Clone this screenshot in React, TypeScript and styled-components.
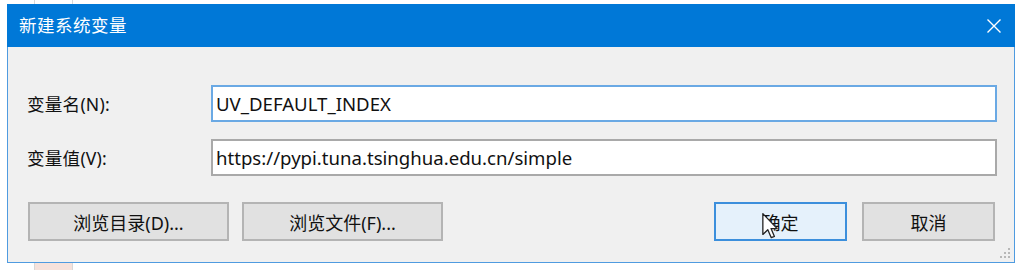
import * as React from "react";
import styled, { createGlobalStyle } from "styled-components";

const GlobalStyle = createGlobalStyle`
  html, body {
    margin: 0;
    padding: 0;
    background: #ffffff;
    width: 1024px;
    height: 270px;
    overflow: hidden;
  }
  body {
    font-family: "Noto Sans", "Noto Sans CJK SC", sans-serif;
  }
`;

// Page behind the dialog
const Desk = styled.div`
  position: relative;
  width: 1024px;
  height: 270px;
  padding: 4px 0 0 7px;
  box-sizing: border-box;
  background-color: #ffffff;
  background-image: linear-gradient(#d8d8d8, #d8d8d8),
    linear-gradient(#d8d8d8, #d8d8d8), linear-gradient(#f6e2dc, #f6e2dc);
  background-size: 1px 270px, 1px 270px, 37px 8px;
  background-position: 34px 0, 72px 0, 35px 262px;
  background-repeat: no-repeat;
`;

const Dialog = styled.div`
  width: 1008px;
  height: 259px;
  display: flex;
  flex-direction: column;
  box-sizing: border-box;
  border: 1px solid #4f9be0;
  border-top: none;
  background: #f0f0f0;
  position: relative;
`;

const TitleBar = styled.div`
  height: 43px;
  flex-shrink: 0;
  display: flex;
  align-items: center;
  justify-content: space-between;
  background: #0078d7;
  margin: 0 -1px;
  padding: 0 13px 0 12px;
  color: #ffffff;
`;

const Title = styled.span`
  font-family: "Noto Sans CJK SC", sans-serif;
  font-size: 17.5px;
  letter-spacing: 0.5px;
  line-height: 1;
  padding-bottom: 2px;
`;

const CloseIcon = styled.svg`
  width: 16px;
  height: 16px;
  margin-top: 1px;
`;

const Body = styled.div`
  flex: 1;
  display: flex;
  flex-direction: column;
  padding: 38px 17px 20px 19px;
`;

const Row = styled.div<{ $gap?: number }>`
  display: flex;
  align-items: center;
  margin-bottom: ${(p) => p.$gap ?? 0}px;
`;

const Label = styled.label`
  width: 184px;
  flex-shrink: 0;
  font-size: 17.6px;
  color: #111111;
  letter-spacing: 0.2px;
`;

const Field = styled.div<{ $focused?: boolean }>`
  flex: 1;
  height: 37px;
  box-sizing: border-box;
  background: #ffffff;
  border: ${(p) => (p.$focused ? "2px solid #6aa9e4" : "2px solid #a9a9a9")};
  display: flex;
  align-items: center;
  padding-left: 3px;
  font-size: 18.6px;
  color: #111111;
  white-space: nowrap;
`;

const ButtonBar = styled.div`
  display: flex;
  align-items: center;
  margin-top: 26px;
  padding-right: 2px;
  margin-left: 1px;
`;

const Spacer = styled.div`
  flex: 1;
`;

const Button = styled.div<{ $wide?: boolean; $primary?: boolean }>`
  width: ${(p) => (p.$wide ? 201 : 133)}px;
  height: 39px;
  box-sizing: border-box;
  display: flex;
  align-items: center;
  justify-content: center;
  background: ${(p) => (p.$primary ? "#e5f1fb" : "#e1e1e1")};
  border: ${(p) => (p.$primary ? "2px solid #3c8fdc" : "2px solid #b4b4b4")};
  font-size: 18px;
  color: #111111;
  position: relative;
`;

const Gap = styled.div<{ $w: number }>`
  width: ${(p) => p.$w}px;
  flex-shrink: 0;
`;

const Cursor = styled.svg`
  position: absolute;
  left: 46px;
  top: 9px;
  width: 16px;
  height: 26px;
`;

const Grip = styled.svg`
  position: absolute;
  right: 3px;
  bottom: 3px;
  width: 12px;
  height: 12px;
`;

export default function App() {
  return (
    <>
      <GlobalStyle />
      <Desk>
        <Dialog>
          <TitleBar>
            <Title>新建系统变量</Title>
            <CloseIcon viewBox="0 0 16 16">
              <path d="M1.5 1.5 L14.5 14.5 M14.5 1.5 L1.5 14.5" stroke="#ffffff" strokeWidth="1.4" fill="none" />
            </CloseIcon>
          </TitleBar>
          <Body>
            <Row $gap={17}>
              <Label>变量名(N):</Label>
              <Field $focused>UV_DEFAULT_INDEX</Field>
            </Row>
            <Row>
              <Label>变量值(V):</Label>
              <Field>https://pypi.tuna.tsinghua.edu.cn/simple</Field>
            </Row>
            <ButtonBar>
              <Button $wide>浏览目录(D)...</Button>
              <Gap $w={13} />
              <Button $wide>浏览文件(F)...</Button>
              <Spacer />
              <Button $primary>
                确定
                <Cursor viewBox="0 0 12 20">
                  <path
                    d="M0.5 0.5 L0.5 16.5 L4.3 12.9 L7 19 L9.4 18 L6.8 12 L11.5 12 Z"
                    fill="#ffffff"
                    stroke="#222222"
                    strokeWidth="1"
                    strokeLinejoin="round"
                  />
                </Cursor>
              </Button>
              <Gap $w={15} />
              <Button>取消</Button>
            </ButtonBar>
          </Body>
          <Grip viewBox="0 0 12 12">
            {[
              [9, 1],
              [9, 5],
              [5, 5],
              [9, 9],
              [5, 9],
              [1, 9],
            ].map(([x, y]) => (
              <rect key={`${x}-${y}`} x={x} y={y} width="2" height="2" fill="#b8b8b8" />
            ))}
          </Grip>
        </Dialog>
      </Desk>
    </>
  );
}
